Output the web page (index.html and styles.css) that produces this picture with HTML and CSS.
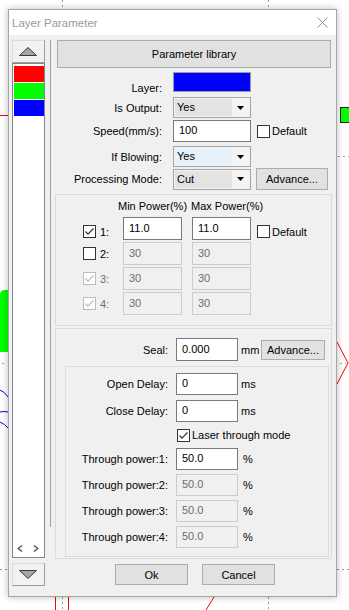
FILE: index.html
```html
<!DOCTYPE html>
<html>
<head>
<meta charset="utf-8">
<title>Layer Parameter</title>
<link rel="stylesheet" href="styles.css">
</head>
<body>
<div class="desk">
  <svg class="backdrop" width="349" height="610" viewBox="0 0 349 610">
    <g stroke="#9a9a9a" stroke-dasharray="2 3" fill="none">
      <path d="M62.5 0V9M268.5 0V9M62.5 597V610M268.5 597V610"/>
      <path d="M0 569.5H8M337 569.5H349M338 156.5H349M2 363.5H7M340 363.5H346"/>
    </g>
    <g stroke="#ff0000" fill="none">
      <path d="M0 115.5H8"/>
      <path d="M55.5 597V610M68.5 597V610"/>
      <path d="M214 597L206 610"/>
      <path d="M337 342L348 363L337 384"/>
    </g>
    <path d="M8 290H4Q0 290 0 296V352H8Z" fill="#00ff00"/>
    <rect x="340.5" y="107.5" width="10" height="15" fill="#00ff00" stroke="#222"/>
    <g stroke="#0000ff" fill="none">
      <path d="M0 390Q5 392 8 397"/>
      <path d="M0 412Q4 411 8 412"/>
      <path d="M0 422Q5 424 8 428"/>
    </g>
  </svg>

  <div class="dialog">
    <div class="titlebar">
      <span class="title">Layer Parameter</span>
      <svg class="close" width="11" height="11" viewBox="0 0 11 11"><path d="M0.5 0.5L10.5 10.5M10.5 0.5L0.5 10.5" stroke="#8f8f8f" stroke-width="1" fill="none"/></svg>
    </div>

    <div class="client">
      <div class="side">
        <div class="scroll-btn"><svg width="18" height="9" viewBox="0 0 18 9"><path d="M0.5 8.5L9 0.5L17.5 8.5Z" fill="#a6a6a6" stroke="#3a3a3a"/></svg></div>
        <div class="layer-list">
          <div class="swatch red"></div>
          <div class="swatch green"></div>
          <div class="swatch blue"></div>
          <div class="list-nav">
            <svg width="6" height="7" viewBox="0 0 6 7"><path d="M5 0.5L1.2 3.5L5 6.5" stroke="#555" stroke-width="1.4" fill="none"/></svg>
            <svg width="6" height="7" viewBox="0 0 6 7"><path d="M1 0.5L4.8 3.5L1 6.5" stroke="#555" stroke-width="1.4" fill="none"/></svg>
          </div>
        </div>
        <div class="scroll-btn down"><svg width="18" height="9" viewBox="0 0 18 9"><path d="M0.5 0.5L9 8.5L17.5 0.5Z" fill="#a6a6a6" stroke="#3a3a3a"/></svg></div>
      </div>

      <div class="splitter"></div>

      <div class="main">
        <button class="btn lib">Parameter library</button>

        <div class="row r-layer"><span class="lbl low">Layer:</span><span class="color-box"></span></div>
        <div class="row r-output"><span class="lbl">Is Output:</span>
          <div class="combo"><span class="combo-field">Yes</span><span class="combo-arrow"><svg width="7" height="4" viewBox="0 0 7 4"><path d="M0 0H7L3.5 4Z" fill="#000"/></svg></span></div>
        </div>
        <div class="row r-speed"><span class="lbl">Speed(mm/s):</span><div class="field w78">100</div><span class="cb gap6"></span><span class="cb-text">Default</span></div>
        <div class="row r-blow"><span class="lbl">If Blowing:</span>
          <div class="combo"><span class="combo-field hot">Yes</span><span class="combo-arrow"><svg width="7" height="4" viewBox="0 0 7 4"><path d="M0 0H7L3.5 4Z" fill="#000"/></svg></span></div>
        </div>
        <div class="row r-mode"><span class="lbl">Processing Mode:</span>
          <div class="combo"><span class="combo-field">Cut</span><span class="combo-arrow"><svg width="7" height="4" viewBox="0 0 7 4"><path d="M0 0H7L3.5 4Z" fill="#000"/></svg></span></div>
          <button class="btn adv">Advance...</button>
        </div>

        <div class="group power">
          <div class="ph"><span class="ph-min">Min Power(%)</span><span>Max Power(%)</span></div>
          <div class="prow">
            <span class="cb checked low"><svg width="11" height="11" viewBox="0 0 11 11"><path d="M1.5 5.5L4 8.2L9.5 2.5" stroke="#333" stroke-width="1.2" fill="none"/></svg></span>
            <span class="num low">1:</span>
            <div class="field pw">11.0</div><div class="field pw second">11.0</div>
            <span class="cb gap6 low"></span><span class="cb-text low">Default</span>
          </div>
          <div class="prow">
            <span class="cb"></span><span class="num">2:</span>
            <div class="field pw dis">30</div><div class="field pw second dis">30</div>
          </div>
          <div class="prow">
            <span class="cb dis"><svg width="11" height="11" viewBox="0 0 11 11"><path d="M1.5 5.5L4 8.2L9.5 2.5" stroke="#bcbcbc" stroke-width="1.2" fill="none"/></svg></span><span class="num grey">3:</span>
            <div class="field pw dis">30</div><div class="field pw second dis">30</div>
          </div>
          <div class="prow">
            <span class="cb dis"><svg width="11" height="11" viewBox="0 0 11 11"><path d="M1.5 5.5L4 8.2L9.5 2.5" stroke="#bcbcbc" stroke-width="1.2" fill="none"/></svg></span><span class="num grey">4:</span>
            <div class="field pw dis">30</div><div class="field pw second dis">30</div>
          </div>
        </div>

        <div class="group seal-group">
          <div class="row r-seal"><span class="lbl ls">Seal:</span><div class="field w62">0.000</div><span class="unit mm">mm</span><button class="btn adv2">Advance...</button></div>
          <div class="group inner">
            <div class="row ir first"><span class="lbl li">Open Delay:</span><div class="field w62">0</div><span class="unit">ms</span></div>
            <div class="row ir close-row"><span class="lbl li">Close Delay:</span><div class="field w62">0</div><span class="unit">ms</span></div>
            <div class="row cbrow"><span class="cb checked"><svg width="11" height="11" viewBox="0 0 11 11"><path d="M1.5 5.5L4 8.2L9.5 2.5" stroke="#333" stroke-width="1.2" fill="none"/></svg></span><span class="cb-text">Laser through mode</span></div>
            <div class="row ir tp tp1"><span class="lbl li">Through power:1:</span><div class="field w62">50.0</div><span class="unit pct">%</span></div>
            <div class="row ir tp"><span class="lbl li">Through power:2:</span><div class="field w62 dis">50.0</div><span class="unit pct">%</span></div>
            <div class="row ir tp"><span class="lbl li">Through power:3:</span><div class="field w62 dis">50.0</div><span class="unit pct">%</span></div>
            <div class="row ir tp"><span class="lbl li">Through power:4:</span><div class="field w62 dis">50.0</div><span class="unit pct">%</span></div>
          </div>
        </div>

        <div class="actions"><button class="btn act">Ok</button><button class="btn act">Cancel</button></div>
      </div>
    </div>
  </div>
</div>
</body>
</html>
```

FILE: styles.css
```css
* { box-sizing: border-box; }
html, body { margin: 0; padding: 0; }
body {
  width: 349px;
  height: 610px;
  overflow: hidden;
  background: #fff;
  font-family: "Liberation Sans", Arial, sans-serif;
  font-size: 11px;
  color: #000;
}
.desk {
  position: relative;
  width: 349px;
  height: 610px;
  padding: 9px 0 0 8px;
}
.backdrop { position: absolute; left: 0; top: 0; }

.dialog {
  position: relative;
  width: 329px;
  height: 588px;
  border: 1px solid #a6a6a6;
  background: #f0f0f0;
  box-shadow: 0 0 7px rgba(0, 0, 0, 0.28);
  display: flex;
  flex-direction: column;
}
.titlebar {
  height: 25px;
  flex: none;
  background: #fff;
  display: flex;
  align-items: center;
  justify-content: space-between;
  padding: 0 8px 0 3px;
}
.title { font-size: 11.5px; color: #9a9a9a; }
.close { display: block; }

.client {
  flex: 1;
  display: flex;
  padding: 5px 0 0 3px;
}

/* left layer strip */
.side { width: 33px; flex: none; display: flex; flex-direction: column; }
.scroll-btn {
  height: 23px;
  border: 1px solid;
  border-color: #dadada #9c9c9c #9c9c9c #dadada;
  background: #f2f2f2;
  display: flex;
  align-items: center;
  justify-content: center;
  padding-right: 2px;
}
.scroll-btn svg { display: block; }
.scroll-btn.down { margin-top: 5px; padding-bottom: 1px; }
.layer-list {
  height: 495px;
  border: 1px solid #828790;
  background: #fff;
  padding: 2px 0 5px 1px;
  display: flex;
  flex-direction: column;
  gap: 1px;
}
.swatch { height: 16px; width: 30px; }
.swatch.red { background: #ff0000; }
.swatch.green { background: #00ff00; }
.swatch.blue { background: #0000ff; }
.list-nav { margin-top: auto; display: flex; gap: 10px; padding-left: 3px; }
.list-nav svg { display: block; }

.splitter { width: 1px; height: 487px; background: #a0a0a0; margin-left: 5px; flex: none; }

/* main form */
.main { width: 277px; margin-left: 4px; display: flex; flex-direction: column; }

.btn {
  font: inherit;
  color: #000;
  background: #e1e1e1;
  border: 1px solid #adadad;
  padding: 0;
  margin: 0;
  display: flex;
  align-items: center;
  justify-content: center;
}
.lib { height: 28px; margin: 0 1px 0 2px; }

.row { display: flex; align-items: center; }
.lbl { width: 107px; margin-right: 11px; text-align: right; flex: none; white-space: nowrap; }
.lbl.low { padding-top: 5px; }

.r-layer { margin-top: 4px; height: 20px; }
.r-output { margin-top: 5px; height: 21px; }
.r-speed { margin-top: 2px; height: 22px; }
.r-blow { margin-top: 4px; height: 21px; }
.r-mode { margin-top: 1px; height: 22px; }

.color-box { width: 78px; height: 20px; background: #0000ff; border: 1px solid #9a9a9a; }

.combo {
  width: 78px;
  height: 21px;
  border: 1px solid #a3a3a3;
  background: #f4f4f4;
  display: flex;
  padding: 1px;
}
.combo-field {
  flex: 1;
  background: #e3e3e3;
  padding: 0 0 1px 2px;
  display: flex;
  align-items: center;
}
.combo-field.hot { background: #e5f1fb; }
.combo-arrow { width: 17px; flex: none; display: flex; align-items: center; justify-content: center; }
.combo-arrow svg { display: block; }

.field {
  height: 22px;
  border: 1px solid #7a7a7a;
  background: #fff;
  padding: 0 0 2px 5px;
  display: flex;
  align-items: center;
  flex: none;
}
.field.dis { border-color: #cccccc; background: #f0f0f0; color: #6d6d6d; }
.w78 { width: 78px; }
.w62 { width: 62px; }

.cb {
  width: 13px;
  height: 13px;
  border: 1px solid #333;
  background: #fff;
  flex: none;
  display: flex;
}
.cb svg { display: block; }
.cb.dis { border-color: #bcbcbc; }
.gap6 { margin-left: 6px; }
.cb-text { margin-left: 2px; white-space: nowrap; }

.adv { width: 72px; height: 22px; margin-left: 5px; }

/* groups */
.group { border: 1px solid #dcdcdc; }
.power { margin-top: 4px; padding-bottom: 10px; }
.ph { height: 21px; margin-bottom: 1px; display: flex; align-items: center; padding-left: 62px; }
.ph-min { width: 73px; }
.prow { display: flex; align-items: center; height: 23px; padding-left: 27px; margin-top: 2px; }
.ph + .prow { margin-top: 0; }
.num { width: 27px; padding-left: 4px; flex: none; }
.num.grey { color: #6d6d6d; }
.low { margin-top: 6px; }
.field.pw { width: 59px; height: 23px; }
.field.second { margin-left: 10px; }

.seal-group { margin-top: 2px; padding: 9px 0 1px 0; }
.r-seal { height: 23px; }
.r-seal .field { height: 23px; }
.ls { width: 112px; margin-right: 8px; }
.unit { margin-left: 3px; }
.unit.mm { width: 20px; flex: none; }
.unit.pct { margin-left: 5px; }
.adv2 { width: 64px; height: 20px; margin-left: 0; }

.inner { margin: 5px 2px 0 9px; padding: 6px 0 8px 0; }
.li { width: 102px; margin-right: 8px; }
.ir { height: 22px; }
.close-row { margin-top: 5px; }
.cbrow { height: 14px; margin-top: 6px; padding-left: 111px; }
.tp { margin-top: 4px; }
.tp1 { margin-top: 6px; }

.actions { display: flex; margin-top: 5px; padding-left: 60px; gap: 14px; }
.act { width: 73px; height: 21px; }
```
